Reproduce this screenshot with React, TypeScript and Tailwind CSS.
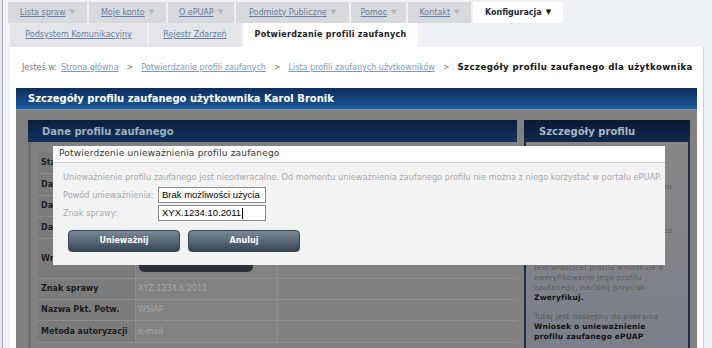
import React from "react";

const Arrow = ({ dark }: { dark?: boolean }) => (
  <span className={dark ? "ml-[4px] text-[7px] text-[#111]" : "ml-[4px] text-[7px] text-[#b4b8be]"}>▼</span>
);

function Tab({ label, w, active }: { label: string; w: string; active?: boolean }) {
  return (
    <div
      className={
        (active ? "bg-white text-[#1a2a3a] font-bold " : "bg-[#d7d9dc] text-[#5f7fa8] ") +
        "h-full flex items-center justify-center text-[8px] " +
        w
      }
    >
      <span className={active ? "" : "underline"}>{label}</span>
      <Arrow dark={active} />
    </div>
  );
}

function Row({ label, value, h, children }: { label: string; value?: string; h: string; children?: React.ReactNode }) {
  return (
    <div className={"flex border-b border-[#8d8d8d] " + h}>
      <div className="w-[97px] bg-[#7b7b7b] flex items-center pl-[3px] text-[8px] font-bold text-[#1c1c1c]">
        {label}
      </div>
      <div className="w-[143px] bg-[#828282] border-l border-[#8f8f8f] border-r flex items-center pl-[2px] text-[8px] text-[#a6a6a6]">
        {value}
        {children}
      </div>
    </div>
  );
}

export default function App() {
  return (
    <div className="relative w-[712px] h-[348px] overflow-hidden bg-[#e4e8ed] pl-[2px] font-['DejaVu_Sans',sans-serif]">
      <div className="h-full border-l border-[#a9adb2] bg-[#eef2f7] flex flex-col">
        {/* nav row 1 */}
        <div className="flex gap-[2px] pl-[5px] pt-[2px] h-[23px]">
          <Tab label="Lista spraw" w="w-[79px]" />
          <Tab label="Moje konto" w="w-[77px]" />
          <Tab label="O ePUAP" w="w-[66px]" />
          <Tab label="Podmioty Publiczne" w="w-[113px]" />
          <Tab label="Pomoc" w="w-[55px]" />
          <Tab label="Kontakt" w="w-[63px]" />
          <Tab label="Konfiguracja" w="w-[90px]" active />
        </div>
        {/* nav row 2 */}
        <div className="flex gap-[2px] pl-[7px] h-[24px] text-[8px]">
          <div className="w-[137px] bg-[#e3e5e8] flex items-center justify-center text-[#5f7fa8] underline">
            Podsystem Komunikacyjny
          </div>
          <div className="w-[92px] bg-[#e3e5e8] flex items-center justify-center text-[#5f7fa8] underline">
            Rejestr Zdarzeń
          </div>
          <div className="w-[175px] bg-white flex items-center justify-center font-bold text-[#1a1a1a] tracking-[0.3px]">
            Potwierdzanie profili zaufanych
          </div>
        </div>
        {/* content */}
        <div className="flex-1 ml-[7px] mr-[8px] bg-white border-r border-[#cdd1d6] px-[6px] flex flex-col">
          <div className="h-[41px] flex items-center pl-[6px] text-[8px] text-[#777] whitespace-nowrap">
            <span>Jesteś w:</span>
            <span className="ml-[4px] underline text-[#7e9abb]">Strona główna</span>
            <span className="mx-[8px]">&gt;</span>
            <span className="underline text-[#7e9abb]">Potwierdzanie profili zaufanych</span>
            <span className="mx-[8px]">&gt;</span>
            <span className="underline text-[#7e9abb]">Lista profili zaufanych użytkowników</span>
            <span className="mx-[8px]">&gt;</span>
            <span className="font-bold text-[8.6px] text-[#111] tracking-[0.4px]">Szczegóły profilu zaufanego dla użytkownika</span>
          </div>
          <div className="h-[22px] bg-gradient-to-b from-[#0b2d5c] to-[#1d5b9a] border-b border-[#6f9ccc] flex items-center pl-[12px] text-[10px] font-bold text-white">
            Szczegóły profilu zaufanego użytkownika Karol Bronik
          </div>
          {/* dimmed area */}
          <div className="flex-1 bg-[#818181] pt-[10px] pl-[12px] pr-[6px] flex gap-[7px]">
            {/* left box */}
            <div className="w-[489px] flex flex-col">
              <div className="h-[22px] bg-gradient-to-b from-[#0a1f3e] to-[#12335d] flex items-center pl-[14px] text-[10px] font-bold text-[#9eb0c5]">
                Dane profilu zaufanego
              </div>
              <div className="flex-1 border-l-[3px] border-[#717171] pl-[7px] pt-[10px]">
                <Row label="Status" value="Aktywny" h="h-[22px]" />
                <Row label="Data utworzenia" value="2011-06-01" h="h-[22px]" />
                <Row label="Data ważności" value="2014-06-01" h="h-[21px]" />
                <Row label="Data potwierdzenia" value="2011-06-01" h="h-[22px]" />
                <Row label="Wniosek" h="h-[40px]">
                  <div className="self-start mt-[11px] ml-[1px] w-[114px] h-[22px] rounded-[5px] bg-[#2a2e35]" />
                </Row>
                <Row label="Znak sprawy" value="XYZ.1234.6.2011" h="h-[21px]" />
                <Row label="Nazwa Pkt. Potw." value="WSIAP" h="h-[21px]" />
                <Row label="Metoda autoryzacji" value="e-mail" h="h-[22px]" />
              </div>
            </div>
            {/* right panel */}
            <div className="w-[166px] flex flex-col">
              <div className="h-[22px] bg-gradient-to-b from-[#081a36] to-[#10294c] flex items-center pl-[15px] text-[10px] font-bold text-[#a7b5c7]">
                Szczegóły profilu
              </div>
              <div className="flex-1 border-x-[2px] border-[#1b2a45] bg-gradient-to-b from-[#878787] to-[#7b7f89] pl-[8px] pr-[2px] pt-[20px] text-[7.5px] leading-[10px] text-[#5c5c5c] tracking-[0.2px] whitespace-nowrap">
                <p>Jeśli chcesz unieważnić</p>
                <p>profil zaufany, wybierz</p>
                <p className="text-right pr-[14px]">przycisk Unieważnij w tym widoku</p>
                <p className="mt-[13px]">Jeśli właściciel profilu</p>
                <p>zgłosił jego utratę,</p>
                <p className="mt-[1px] text-right pr-[14px]">sprawdź dane i dopiero zrób to</p>
                <p className="mt-[27px]">Jest właścicel profilu wnioskuje o</p>
                <p>zweryfikowanie jego profilu</p>
                <p>zaufanego, naciśnij przycisk</p>
                <p className="font-bold text-[#111]">Zweryfikuj.</p>
                <p className="mt-[9px]">Tutaj jest dostępny do pobrania</p>
                <p className="font-bold text-[#111]">Wniosek o unieważnienie</p>
                <p className="font-bold text-[#111]">profilu zaufanego ePUAP</p>
              </div>
            </div>
          </div>
        </div>
      </div>

      {/* modal dialog */}
      <div className="absolute left-[53px] top-[146px] w-[612px] h-[119px] bg-[#f3f3f3] flex flex-col">
        <div className="h-[17px] bg-white border-b border-[#cfcfcf] flex items-center pl-[6px] text-[9px] text-[#333] tracking-[0.2px]">
          Potwierdzenie unieważnienia profilu zaufanego
        </div>
        <div className="pl-[10px] pt-[9px] text-[8.2px] text-[#a9a9a9]">
          <p className="leading-[10px] whitespace-nowrap">
            Unieważnienie profilu zaufanego jest nieodwracalne. Od momentu unieważnienia zaufanego profilu nie można z niego korzystać w portalu ePUAP.
          </p>
          <div className="mt-[5px] flex items-center h-[16px]">
            <span className="w-[95px]">Powód unieważnienia:</span>
            <div className="w-[108px] h-[16px] bg-white border border-[#8a8a8a] flex items-center pl-[3px] font-['Liberation_Sans',sans-serif] text-[9.5px] text-black">
              Brak możliwości użycia
            </div>
          </div>
          <div className="mt-[2px] flex items-center h-[16px]">
            <span className="w-[95px]">Znak sprawy:</span>
            <div className="w-[108px] h-[16px] bg-white border border-[#8a8a8a] flex items-center pl-[3px] font-['Liberation_Sans',sans-serif] text-[9.5px] text-black">
              XYX.1234.10.2011<span className="ml-[1px] w-[1px] h-[11px] bg-black" />
            </div>
          </div>
          <div className="mt-[9px] ml-[5px] flex gap-[8px]">
            <button className="w-[112px] h-[22px] rounded-[4px] bg-gradient-to-b from-[#7b8998] to-[#3a4756] border border-[#3a4450] text-white text-[8px] font-bold">
              Unieważnij
            </button>
            <button className="w-[112px] h-[22px] rounded-[4px] bg-gradient-to-b from-[#7b8998] to-[#3a4756] border border-[#3a4450] text-white text-[8px] font-bold">
              Anuluj
            </button>
          </div>
        </div>
      </div>
    </div>
  );
}
